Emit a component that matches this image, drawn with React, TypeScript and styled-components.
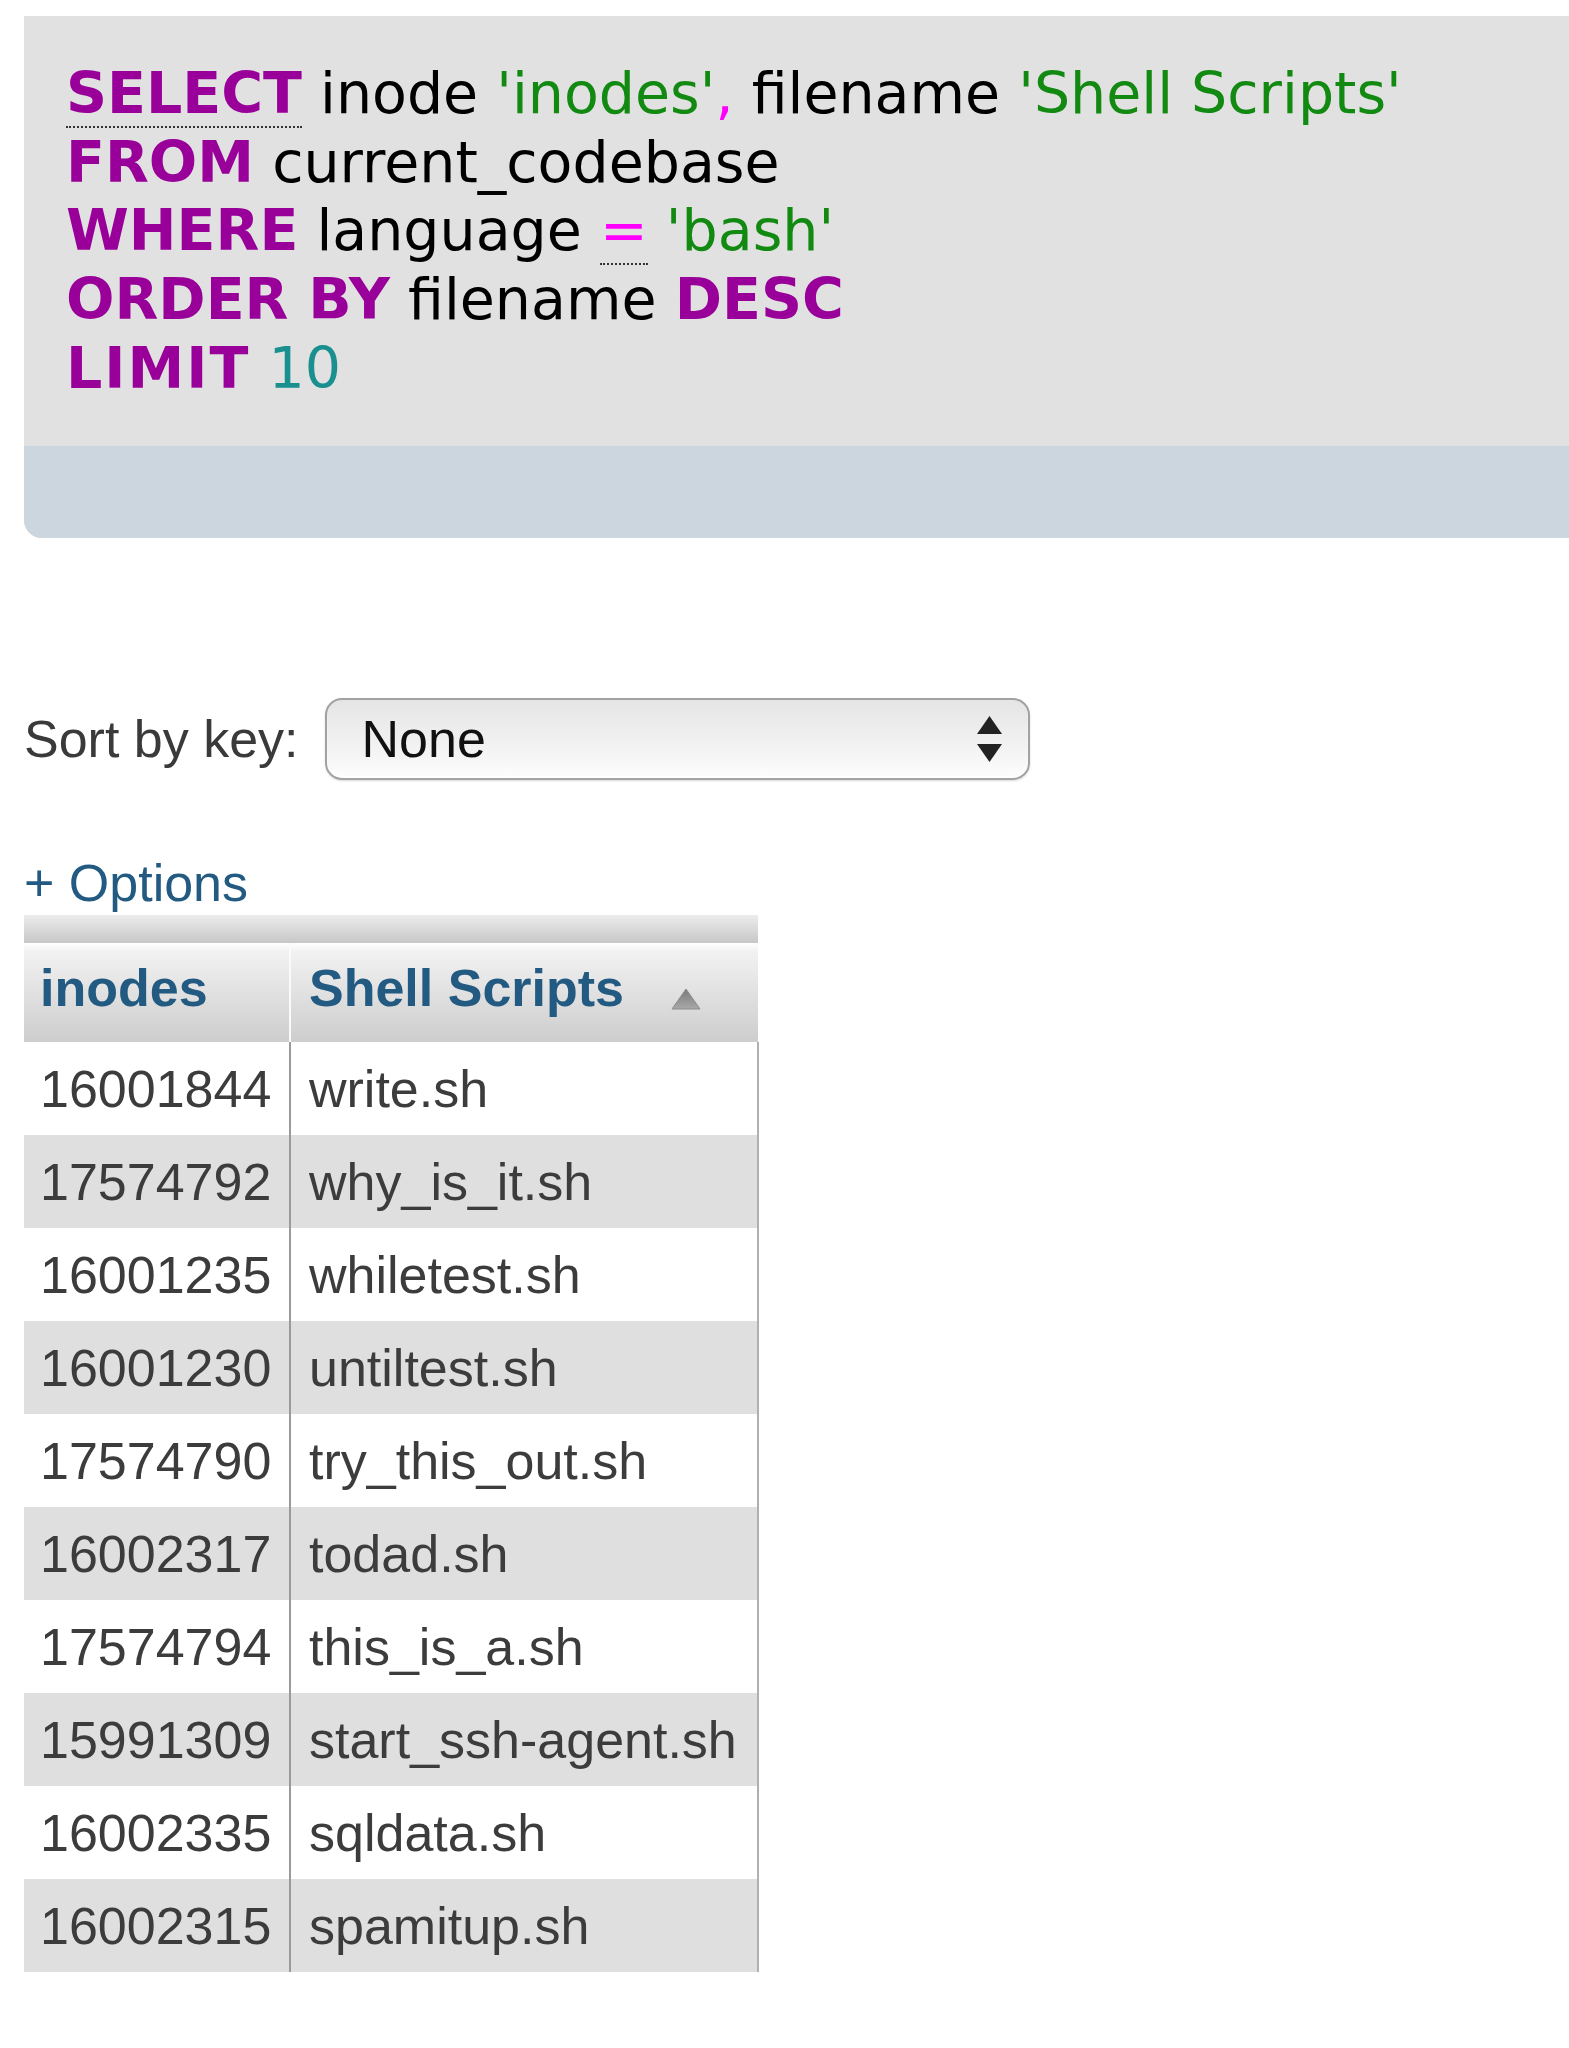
import React from 'react';
import styled, { createGlobalStyle } from 'styled-components';

const GlobalStyle = createGlobalStyle`
  html, body {
    margin: 0;
    padding: 0;
    background: #ffffff;
  }
  body {
    font-family: "Liberation Sans", Arial, Helvetica, sans-serif;
    font-size: 52px;
    color: #444444;
    overflow: hidden;
  }
`;

const Page = styled.div`
  padding-top: 16px;
`;

// SQL query box
const QueryPanel = styled.div`
  margin-left: 24px;
  background: #e1e1e1;
  border-radius: 0 0 0 18px;
  overflow: hidden;
`;

const QueryCode = styled.pre`
  margin: 0;
  padding: 43px 40px 43px 42px;
  font-family: "DejaVu Sans", Verdana, sans-serif;
  font-size: 57px;
  line-height: 68.7px;
  color: #000000;
  white-space: pre;
`;

const QueryLine = styled.div``;

const Keyword = styled.span<{ $doc?: boolean; $wide?: boolean }>`
  color: #990099;
  font-weight: bold;
  letter-spacing: ${p => (p.$wide ? '2px' : 'normal')};
  border-bottom: ${p => (p.$doc ? '2px dotted #333333' : 'none')};
`;

const Quote = styled.span`
  color: #128a12;
`;

const Digit = styled.span`
  color: #1a8f8f;
`;

const Punct = styled.span<{ $doc?: boolean }>`
  color: #ff00ff;
  border-bottom: ${p => (p.$doc ? '2px dotted #333333' : 'none')};
`;

const QueryToolbar = styled.div`
  height: 92px;
  background: #ccd6df;
`;

// Sort by key
const SortRow = styled.div`
  display: flex;
  align-items: center;
  gap: 26px;
  margin: 160px 0 0 24px;
  line-height: 60px;
`;

const SortLabel = styled.label`
  color: #3a3a3a;
`;

const SelectBox = styled.div`
  box-sizing: border-box;
  width: 705px;
  height: 82px;
  display: flex;
  align-items: center;
  justify-content: space-between;
  padding: 0 26px 0 35px;
  border: 2px solid #a2a2a2;
  border-radius: 17px;
  background: linear-gradient(#e5e5e5, #f1f1f1 55%, #fdfdfd);
  box-shadow: inset 0 -2px 2px rgba(255, 255, 255, 0.8), 0 1px 2px rgba(0, 0, 0, 0.15);
  color: #111111;
`;

const OptionsLink = styled.a`
  display: block;
  margin: 73px 0 2px 24px;
  line-height: 60px;
  color: #235a81;
  text-decoration: none;
`;

// Result table
const ResultTable = styled.table`
  margin-left: 24px;
  border-collapse: collapse;
  border-spacing: 0;
`;

const StripCell = styled.td`
  height: 28px;
  padding: 0;
  background: linear-gradient(#ececec, #c7c7c7);
`;

const HeadCell = styled.th<{ $first?: boolean }>`
  box-sizing: border-box;
  width: ${p => (p.$first ? '266px' : '468px')};
  padding: 15px 16px 24px ${p => (p.$first ? '16px' : '18px')};
  line-height: 60px;
  text-align: left;
  font-weight: bold;
  color: #235a81;
  background: linear-gradient(#ffffff, #f2f2f2 8%, #cdcdcd);
  border-left: ${p => (p.$first ? 'none' : '2px solid #fafafa')};
  white-space: nowrap;
`;

const SortArrow = styled.svg`
  margin-left: 47px;
  vertical-align: -4px;
`;

const BodyRow = styled.tr<{ $even: boolean }>`
  background: ${p => (p.$even ? '#dfdfdf' : '#ffffff')};
`;

const BodyCell = styled.td<{ $first?: boolean }>`
  padding: 18px 16px 16px ${p => (p.$first ? '16px' : '18px')};
  line-height: 59px;
  color: #3c3c3c;
  white-space: nowrap;
  border-right: 2px solid ${p => (p.$first ? '#9a9a9a' : '#b0b0b0')};
`;

const rows: [string, string][] = [
  ['16001844', 'write.sh'],
  ['17574792', 'why_is_it.sh'],
  ['16001235', 'whiletest.sh'],
  ['16001230', 'untiltest.sh'],
  ['17574790', 'try_this_out.sh'],
  ['16002317', 'todad.sh'],
  ['17574794', 'this_is_a.sh'],
  ['15991309', 'start_ssh-agent.sh'],
  ['16002335', 'sqldata.sh'],
  ['16002315', 'spamitup.sh'],
];

const UpDownArrows = () => (
  <svg width="25" height="46" viewBox="0 0 25 46">
    <path d="M12.5 0 L25 18 L0 18 Z" fill="#222222" />
    <path d="M0 28 L25 28 L12.5 46 Z" fill="#222222" />
  </svg>
);

export default function App() {
  return (
    <>
      <GlobalStyle />
      <Page>
        <QueryPanel>
          <QueryCode>
            <QueryLine>
              <Keyword $doc>SELECT</Keyword> inode <Quote>'inodes'</Quote>
              <Punct>,</Punct> filename <Quote>'Shell Scripts'</Quote>
            </QueryLine>
            <QueryLine>
              <Keyword>FROM</Keyword> current_codebase
            </QueryLine>
            <QueryLine>
              <Keyword>WHERE</Keyword> language <Punct $doc>=</Punct> <Quote>'bash'</Quote>
            </QueryLine>
            <QueryLine>
              <Keyword>ORDER BY</Keyword> filename <Keyword>DESC</Keyword>
            </QueryLine>
            <QueryLine>
              <Keyword $wide>LIMIT</Keyword> <Digit>10</Digit>
            </QueryLine>
          </QueryCode>
          <QueryToolbar />
        </QueryPanel>

        <SortRow>
          <SortLabel>Sort by key:</SortLabel>
          <SelectBox>
            <span>None</span>
            <UpDownArrows />
          </SelectBox>
        </SortRow>

        <OptionsLink href="#">+ Options</OptionsLink>

        <ResultTable>
          <thead>
            <tr>
              <StripCell colSpan={2} />
            </tr>
            <tr>
              <HeadCell $first>inodes</HeadCell>
              <HeadCell>
                Shell Scripts
                <SortArrow width="30" height="22" viewBox="0 0 30 22">
                  <defs>
                    <linearGradient id="ascGrad" x1="0" y1="0" x2="0" y2="1">
                      <stop offset="0" stopColor="#7a7a7a" />
                      <stop offset="1" stopColor="#a8a8a8" />
                    </linearGradient>
                  </defs>
                  <path d="M15 1 L29 21 L1 21 Z" fill="url(#ascGrad)" stroke="#8c8c8c" strokeWidth="1" />
                </SortArrow>
              </HeadCell>
            </tr>
          </thead>
          <tbody>
            {rows.map(([inode, name], i) => (
              <BodyRow key={inode} $even={i % 2 === 1}>
                <BodyCell $first>{inode}</BodyCell>
                <BodyCell>{name}</BodyCell>
              </BodyRow>
            ))}
          </tbody>
        </ResultTable>
      </Page>
    </>
  );
}
